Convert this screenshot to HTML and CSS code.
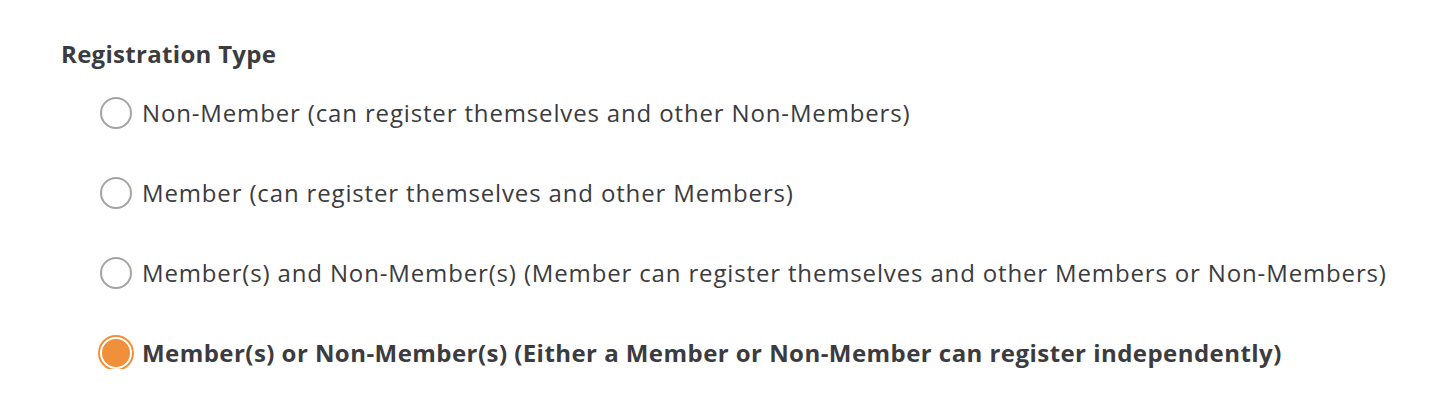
FILE: index.html
```html
<!DOCTYPE html>
<html lang="en">
<head>
    <meta charset="UTF-8">
    <title>Registration Type</title>
    <link rel="stylesheet" href="styles.css">
</head>
<body>
    <div class="reg-type">
        <div class="reg-title">Registration Type</div>
        <div class="options">
            <label class="option">
                <span class="radio"></span>
                <span>Non-Member (can register themselves and other Non-Members)</span>
            </label>
            <label class="option">
                <span class="radio"></span>
                <span>Member (can register themselves and other Members)</span>
            </label>
            <label class="option">
                <span class="radio"></span>
                <span>Member(s) and Non-Member(s) (Member can register themselves and other Members or Non-Members)</span>
            </label>
            <label class="option selected">
                <span class="radio"></span>
                <span>Member(s) or Non-Member(s) (Either a Member or Non-Member can register independently)</span>
            </label>
        </div>
    </div>
</body>
</html>
```

FILE: styles.css
```css
body {
    margin: 0;
    background: #fff;
    color: #3b3b40;
    font-family: "Open Sans", sans-serif;
}
.reg-type {
    padding: 38px 0 0 61px;
}
.reg-title {
    font-size: 24px;
    font-weight: bold;
    line-height: 32px;
    letter-spacing: 0.3px;
}
.options {
    display: flex;
    flex-direction: column;
    gap: 48px;
    margin: 27px 0 0 39px;
}
.option {
    display: flex;
    align-items: center;
    gap: 10px;
    font-size: 24px;
    line-height: 32px;
    letter-spacing: 0.85px;
}
.radio {
    flex: none;
    box-sizing: border-box;
    width: 32px;
    height: 32px;
    border: 2px solid #a3a3a3;
    border-radius: 50%;
}
.option.selected {
    font-weight: bold;
    letter-spacing: 0.45px;
}
.option.selected .radio {
    background: #f0903a;
    border-color: #fff;
    box-shadow: 0 0 0 2px #f0903a;
}
```
